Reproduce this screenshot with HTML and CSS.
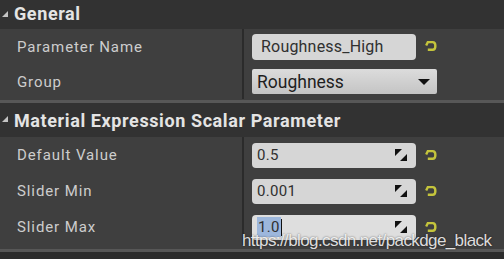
FILE: index.html
```html
<!DOCTYPE html>
<html lang="en">
<head>
    <meta charset="UTF-8">
    <meta name="viewport" content="width=device-width, initial-scale=1.0">
    <title>Details</title>
    <link rel="stylesheet" href="styles.css">
</head>
<body>

    <div class="panel">
        <div class="category">
            <div class="cat-header"><span class="arrow"></span>General</div>
            <div class="cat-body">
                <div class="row">
                    <div class="label">Parameter Name</div>
                    <div class="value">
                        <div class="field text-field">Roughness_High</div>
                        <svg class="reset" viewBox="0 0 12 12"><path d="M2 5 L3.5 2 H8 Q10.5 2 10.5 5.5 Q10.5 9 8 9 H3.5" fill="none" stroke="#c4c43c" stroke-width="2.2"/></svg>
                    </div>
                </div>
                <div class="row">
                    <div class="label">Group</div>
                    <div class="value">
                        <div class="field combo">Roughness<span class="caret"></span></div>
                    </div>
                </div>
            </div>
        </div>

        <div class="category">
            <div class="cat-header"><span class="arrow"></span>Material Expression Scalar Parameter</div>
            <div class="cat-body tall">
                <div class="row">
                    <div class="label">Default Value</div>
                    <div class="value">
                        <div class="field num">0.5<svg class="spin" viewBox="0 0 12 12"><path d="M0 0 H7 L0 7 Z M12 12 H5 L12 5 Z" fill="#111"/></svg></div>
                        <svg class="reset" viewBox="0 0 12 12"><path d="M2 5 L3.5 2 H8 Q10.5 2 10.5 5.5 Q10.5 9 8 9 H3.5" fill="none" stroke="#c4c43c" stroke-width="2.2"/></svg>
                    </div>
                </div>
                <div class="row">
                    <div class="label">Slider Min</div>
                    <div class="value">
                        <div class="field num">0.001<svg class="spin" viewBox="0 0 12 12"><path d="M0 0 H7 L0 7 Z M12 12 H5 L12 5 Z" fill="#111"/></svg></div>
                        <svg class="reset" viewBox="0 0 12 12"><path d="M2 5 L3.5 2 H8 Q10.5 2 10.5 5.5 Q10.5 9 8 9 H3.5" fill="none" stroke="#c4c43c" stroke-width="2.2"/></svg>
                    </div>
                </div>
                <div class="row">
                    <div class="label">Slider Max</div>
                    <div class="value">
                        <div class="field num active"><span class="sel">1.0</span><span class="cursor"></span><svg class="spin" viewBox="0 0 12 12"><path d="M0 0 H7 L0 7 Z M12 12 H5 L12 5 Z" fill="#111"/></svg></div>
                        <svg class="reset" viewBox="0 0 12 12"><path d="M2 5 L3.5 2 H8 Q10.5 2 10.5 5.5 Q10.5 9 8 9 H3.5" fill="none" stroke="#c4c43c" stroke-width="2.2"/></svg>
                    </div>
                </div>
            </div>
        </div>

        <div class="watermark">https://blog.csdn.net/packdge_black</div>
    </div>

</body>
</html>
```

FILE: styles.css
```css
body {
    margin: 0;
    background-color: #2c2c2c;
    font-family: Roboto, "Liberation Sans", sans-serif;
}
.panel {
    position: relative;
    width: 504px;
    height: 259px;
    overflow: hidden;
}
.category {
    border-bottom: 3px solid #575757;
}
.cat-header {
    height: 27px;
    padding-bottom: 2px;
    display: flex;
    align-items: center;
    padding-left: 14px;
    background-color: #323232;
    color: #e4e4e4;
    font-size: 18px;
    font-weight: bold;
    letter-spacing: 0.6px;
    position: relative;
}
.category + .category .cat-header {
    height: 34px;
    padding-bottom: 0;
}
.arrow {
    position: absolute;
    left: 2px;
    top: 50%;
    margin-top: -4px;
    width: 0;
    height: 0;
    border-left: 6px solid transparent;
    border-bottom: 6px solid #c4c4c4;
}
.cat-body {
    background-color: #3f3f3f;
    padding: 0 0 1px;
}
.row {
    display: grid;
    grid-template-columns: 242px 1fr;
    height: 35px;
}
.tall {
    padding-bottom: 4px;
}
.tall .row {
    height: 36px;
}
.label {
    display: flex;
    align-items: center;
    padding-left: 17px;
    color: #cdcdcd;
    font-size: 15px;
    letter-spacing: 0.9px;
}
.value {
    display: flex;
    align-items: center;
    padding-left: 8px;
    border-left: 2px solid #2b2b2b;
}
.field {
    display: flex;
    align-items: center;
    box-sizing: border-box;
    width: 164px;
    height: 25px;
    padding-left: 6px;
    border-radius: 4px;
    background-color: #d6d6d6;
    color: #303030;
    font-size: 15px;
}
.text-field {
    height: 26px;
    padding-left: 9px;
    font-size: 16px;
    letter-spacing: 0.2px;
}
.combo {
    width: 185px;
    height: 25px;
    padding-left: 5px;
    border-radius: 2px;
    background: linear-gradient(#dcdcdc, #c4c4c4);
    color: #1e1e1e;
    font-size: 17.5px;
    position: relative;
}
.caret {
    position: absolute;
    right: 7px;
    top: 10px;
    border-left: 6px solid transparent;
    border-right: 6px solid transparent;
    border-top: 6px solid #111;
}
.num {
    position: relative;
    padding-left: 5px;
    letter-spacing: 0.3px;
}
.spin {
    position: absolute;
    right: 9px;
    top: 6px;
    width: 12px;
    height: 12px;
}
.reset {
    width: 13px;
    height: 13px;
    margin-left: 8px;
}
.active {
    background-color: #dedede;
}
.sel {
    background-color: #9db7dc;
    padding: 1px 1px;
}
.cursor {
    display: inline-block;
    width: 1px;
    height: 17px;
    background-color: #111;
}
.watermark {
    position: absolute;
    left: 242px;
    top: 231px;
    color: rgba(255, 255, 255, 0.85);
    font-family: "Liberation Sans", sans-serif;
    font-size: 17px;
    letter-spacing: -0.6px;
    text-shadow: 0 0 2px rgba(0, 0, 0, 0.6);
}
```
